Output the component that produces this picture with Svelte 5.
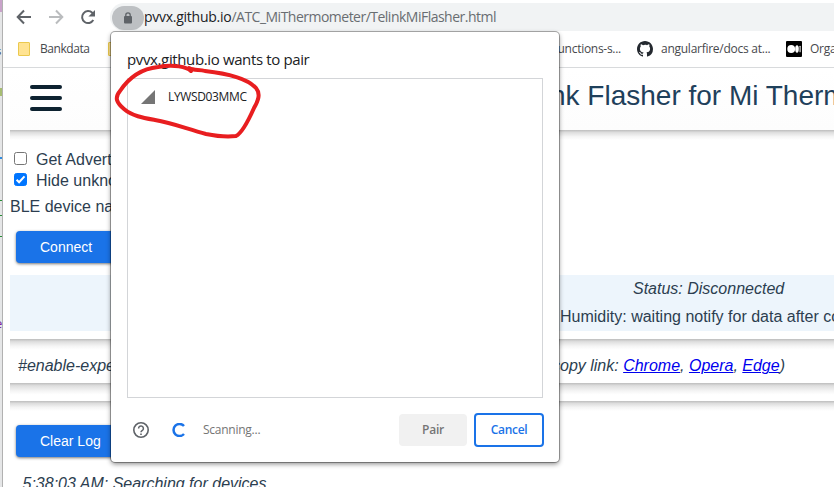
<script>
  let advertising = $state(false);
  let hideUnknown = $state(true);
</script>

{#snippet check(on)}
  <svg class="check" width="13" height="13" viewBox="0 0 13 13">
    <rect x=".5" y=".5" width="12" height="12" rx="2" fill={on ? '#0075ff' : '#fff'} stroke={on ? '#0075ff' : '#767676'} />
    {#if on}<path d="M2.6 6.7 5.1 9.2 10.5 3.4" fill="none" stroke="#fff" stroke-width="2" />{/if}
  </svg>
{/snippet}

<div class="screen">
  <div class="edge">
    <i class="purple" style="top:0"></i><i class="s" style="top:45px">s</i><i class="olive" style="top:88px"></i>
    <i class="blue" style="top:157px"></i><i class="green" style="top:200px"></i><i class="green" style="top:215px"></i>
    <i class="green" style="top:236px"></i><i class="s e" style="top:314px">e</i>
  </div>
  <div class="window">
    <div class="toolbar">
      <svg class="nav" width="105" height="31" viewBox="3 0 105 31" fill="none" stroke="#5f6368" stroke-width="2">
        <path d="M31 17H18M24 10.5 17.7 17l6.3 6.5" />
        <path d="M49 17h13M56 10.5l6.3 6.5-6.3 6.5" stroke="#babcbe" />
        <path d="M93.3 20.1A6 6 0 1 1 92.3 12.8l1.4 1.4" />
        <path d="M95 10v6.6h-6.6z" fill="#5f6368" stroke="none" />
      </svg>
      <div class="omnibox">
        <span class="lock">
          <svg width="10" height="12" viewBox="0 0 10 12"><rect x="1" y="4" width="8" height="7.4" rx="1" fill="#5f6368" /><path d="M2.8 4.5V3a2.2 2.2 0 0 1 4.4 0v1.5" fill="none" stroke="#5f6368" stroke-width="1.3" /></svg>
        </span>
        <span class="url"><b>pvvx.github.io</b>/ATC_MiThermometer/TelinkMiFlasher.html</span>
      </div>
    </div>

    <div class="bookmarks">
      <span class="folder"></span><span class="bank">Bankdata</span><span class="folder second"></span>
      <span class="functions">functions-s...</span>
      <svg class="github" width="16" height="16" viewBox="0 0 16 16"><path fill="#24292f" d="M8 0C3.58 0 0 3.58 0 8c0 3.54 2.29 6.53 5.47 7.59.4.07.55-.17.55-.38 0-.19-.01-.82-.01-1.49-2.01.37-2.53-.49-2.69-.94-.09-.23-.48-.94-.82-1.13-.28-.15-.68-.52-.01-.53.63-.01 1.08.58 1.23.82.72 1.21 1.87.87 2.33.66.07-.52.28-.87.51-1.07-1.78-.2-3.64-.89-3.64-3.95 0-.87.31-1.59.82-2.15-.08-.2-.36-1.02.08-2.12 0 0 .67-.21 2.2.82A7.6 7.6 0 0 1 8 3.86c.68 0 1.36.09 2 .27 1.53-1.04 2.2-.82 2.2-.82.44 1.1.16 1.92.08 2.12.51.56.82 1.27.82 2.15 0 3.07-1.87 3.75-3.65 3.95.29.25.54.73.54 1.48 0 1.07-.01 1.93-.01 2.2 0 .21.15.46.55.38A8 8 0 0 0 16 8c0-4.42-3.58-8-8-8z" /></svg>
      <span class="angular">angularfire/docs at...</span>
      <svg class="medium" width="16" height="16" viewBox="0 0 16 16"><rect width="16" height="16" rx="1" /><circle cx="5.2" cy="8" r="3.9" fill="#fff" /><ellipse cx="11" cy="8" rx="1.8" ry="3.7" fill="#fff" /><rect x="13.5" y="4.7" width="1.2" height="6.6" rx=".6" fill="#ddd" /></svg>
      <span class="org">Organize</span>
    </div>

    <main>
      <header>
        <div class="burger"><span></span><span></span><span></span></div>
        <h1>nk Flasher for Mi Thermometer</h1>
      </header>
      <div class="shade"></div>
      <div class="options">
        <button class="option" onclick={() => (advertising = !advertising)}>{@render check(advertising)}<span>Get Advertising</span></button>
        <button class="option" onclick={() => (hideUnknown = !hideUnknown)}>{@render check(hideUnknown)}<span>Hide unknown</span></button>
      </div>
      <div class="ble">BLE device name</div>
      <button class="primary">Connect</button>
      <section class="status">
        <em>Status: Disconnected</em>
        <p>Humidity: waiting notify for data after connect</p>
      </section>
      <section class="flags">
        <em>#enable-expe</em>
        <em class="links">copy link: <a href="#chrome">Chrome</a>, <a href="#opera">Opera</a>, <a href="#edge">Edge</a>)</em>
      </section>
      <div class="shade gap"></div>
      <div class="shade"></div>
      <button class="primary clear">Clear Log</button>
      <em class="log">5:38:03 AM: Searching for devices</em>
    </main>
  </div>

  <div class="dialog">
    <h2>pvvx.github.io wants to pair</h2>
    <div class="list">
      <svg width="14" height="14" viewBox="0 0 14 14"><path d="M14 0v14H0z" fill="#757575" /></svg>
      <span>LYWSD03MMC</span>
    </div>
    <div class="actions">
      <svg width="16" height="16" viewBox="0 0 16 16" fill="none" stroke="#5f6368"><circle cx="8" cy="8" r="7.2" stroke-width="1.6" /><path d="M5.6 6.5a2.4 2.4 0 1 1 4.2 1.5C9 8.8 8 9 8 10.3" stroke-width="1.5" /><path d="M8 11.4v1.5" stroke-width="1.6" /></svg>
      <svg class="spinner" width="14" height="14" viewBox="0 0 14 14"><path d="M12 3A6 6 0 1 0 12 11" fill="none" stroke="#1a73e8" stroke-width="2.5" /></svg>
      <span class="scan">Scanning...</span>
      <button class="pair"><span>Pair</span></button>
      <button class="cancel"><span>Cancel</span></button>
    </div>
  </div>

  <svg class="marker" width="150" height="84" viewBox="113 60 150 84">
    <path d="M191 71 C187 67 174 64 158 67 C139 69 128 79 120 91 C114 98 117 103 124 109 C132 116 144 118 155 120 C173 123 187 129 206 134 C216 136 228 137 236 136 C242 133 250 117 254 108 C258 101 261 94 256 88 C246 77 223 73 205 71 C200 69 194 71 189 68" />
  </svg>
</div>

<style>
  :global(body) { background: #fff; overflow: hidden; }
  .screen { position: relative; display: flex; width: 834px; height: 487px; overflow: hidden; background: #fff; font-family: "Liberation Sans", Arial, sans-serif; }
  button { font: inherit; border: 0; padding: 0; }
  .edge { position: relative; box-sizing: border-box; flex: none; width: 3px; background: #e5e6e7; border-right: 1px solid #b1b1b1; overflow: hidden; }
  .edge i { position: absolute; left: 0; width: 2px; height: 1px; }
  .edge .purple { height: 12px; background: #c9a3ca; }
  .edge .s { left: -4px; width: auto; height: auto; font: 11px/12px "Open Sans", sans-serif; color: #333; }
  .edge .e { left: -5px; color: #7b1fa2; font-size: 13px; line-height: 18px; }
  .edge .olive { height: 8px; background: #a7bd72; }
  .edge .blue { background: #308be0; height: 2px; }
  .edge .green { background: #258c35; }
  .window { flex: none; width: 831px; height: 487px; display: flex; flex-direction: column; overflow: hidden; }
  .toolbar { flex: none; display: flex; height: 31px; }
  .nav { flex: none; }
  .omnibox { flex: 1; display: flex; align-items: center; margin-top: 3px; height: 28px; background: #f1f3f4; border-radius: 14px 0 0 14px; margin-left: 2px; }
  .lock { flex: none; width: 32px; height: 24px; margin-left: 2px; border-radius: 12px; background: #bdc0c3; display: flex; align-items: center; justify-content: center; margin-top: 1px; }
  .url { font: 14px/20px "Open Sans", sans-serif; color: #696d71; letter-spacing: -.51px; white-space: pre; }
  .url b { font-weight: 400; color: #202124; letter-spacing: -.26px; }
  .bookmarks { flex: none; display: flex; align-items: center; box-sizing: border-box; height: 37px; border-bottom: 1px solid #d8dadc; font: 12px/16px "Open Sans", sans-serif; letter-spacing: -.26px; color: #47494d; white-space: pre; }
  .bookmarks > * { flex: none; }
  .folder { box-sizing: border-box; width: 12px; height: 14px; margin-left: 15px; background: #ffe392; border: 1px solid #ebc94e; border-radius: 1px; }
  .bank { width: 56px; margin-left: 10px; letter-spacing: -.45px; }
  .folder.second { margin-left: 12px; }
  .functions { width: 73px; margin-left: 428px; display: flex; justify-content: flex-end; letter-spacing: -.28px; }
  .github { margin-left: 16px; }
  .angular { width: 109px; margin-left: 8px; }
  .medium { margin-left: 16px; }
  .org { margin-left: 8px; }
  main { flex: 1; display: flex; flex-direction: column; align-items: stretch; margin-left: 7px; color: #2c3e50; font-size: 16px; line-height: 20px; white-space: nowrap; }
  header { flex: none; display: flex; align-items: flex-start; height: 62px; background: linear-gradient(#fff, #fdfdfd); }
  .burger { flex: none; display: flex; flex-direction: column; gap: 7px; width: 32px; margin: 17px 0 0 20px; }
  .burger span { height: 4px; border-radius: 2px; background: #0d2230; }
  h1 { margin: 11px 0 0 488px; font-size: 28px; line-height: 34px; font-weight: 400; color: #1f405b; }
  .shade { flex: none; height: 10px; background: linear-gradient(#bdbdbd, #dedede 25%, #f5f5f5 65%, #fff); }
  .shade.gap { height: 18px; background: linear-gradient(#bdbdbd, #dedede 15%, #f5f5f5 45%, #fff 65%); }
  .options { display: flex; flex-direction: column; margin: 8px 0 0 4px; }
  .option { display: flex; align-items: center; height: 21px; background: none; color: inherit; gap: 9px; }
  .check { flex: none; margin-top: -1px; }
  .option span { margin-top: 2px; }
  .ble { height: 20px; margin-top: 7px; }
  .primary { flex: none; width: 150px; height: 32px; margin: 14px 0 0 6px; padding: 0 0 0 24px; text-align: left; border-radius: 4px; background: #1a73e8; color: #fff; font-size: 14px; box-shadow: 0 1px 3px #0008; }
  .status { flex: none; height: 56px; margin-top: 12px; background: #edf5fc; padding-left: 550px; box-sizing: border-box; }
  .status em { display: block; margin: 4px 0 0 73px; }
  .status p { margin: 8px 0 0; }
  .flags { flex: none; display: flex; height: 44px; margin-top: 8px; background: linear-gradient(#bdbdbd, #dedede 6%, #f5f5f5 16%, #fff 25%); }
  .flags em { margin: 17px 0 0 8px; width: 100px; }
  .flags .links { margin-left: 434px; width: auto; }
  .flags a { color: #0000ee; text-decoration-thickness: 1px; }
  .clear { margin-top: 14px; }
  .log { margin: 17px 0 0 12.5px; }
  .dialog { position: absolute; left: 111px; top: 32px; width: 448px; height: 430px; box-sizing: border-box; padding: 17px 16px 0; display: flex; flex-direction: column; background: #fff; border-radius: 4px; box-shadow: 0 0 0 1px #00000050, 0 2px 5px #0007; }
  h2 { margin: 0; font: 15px/21px "Open Sans", sans-serif; color: #202124; white-space: nowrap; letter-spacing: -.37px; }
  .list { display: flex; align-items: flex-start; margin-top: 8px; height: 320px; box-sizing: border-box; border: 1px solid #d3d5d8; padding: 11px 0 0 13px; gap: 13px; font: 12px/14px "Open Sans", sans-serif; letter-spacing: -.35px; color: #202124; }
  .actions { display: flex; align-items: center; height: 64px; margin-left: 6px; font: 12px/16px "Open Sans", sans-serif; color: #757575; }
  .actions svg { flex: none; }
  .spinner { margin-left: 23px; }
  .scan { flex: none; width: 60px; margin-left: 17px; letter-spacing: -.25px; }
  .pair { flex: none; width: 68px; height: 32px; margin-left: 136px; border-radius: 4px; background: #f1f1f1; color: #757575; font-weight: 600; letter-spacing: -.2px; }
  .cancel { flex: none; box-sizing: border-box; width: 70px; height: 34px; margin-left: 7px; border: 2px solid #1a73e8; border-radius: 4px; background: #fff; color: #1a73e8; font-weight: 600; letter-spacing: -.3px; }
  .marker { position: absolute; left: 113px; top: 60px; }
  .marker path { fill: none; stroke: #e81e20; stroke-width: 4; stroke-linecap: round; stroke-linejoin: round; }
</style>
